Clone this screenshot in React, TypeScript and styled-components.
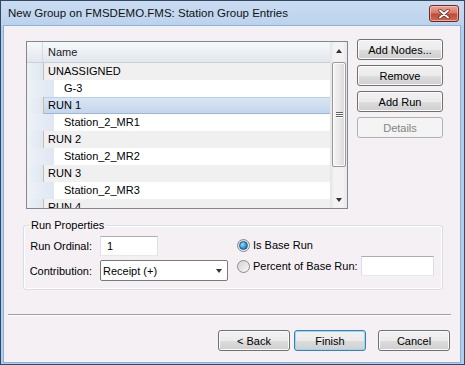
import styled, { createGlobalStyle } from 'styled-components';

const GlobalStyle = createGlobalStyle`
  html, body { margin: 0; padding: 0; background: #fff; }
  body { font-family: 'Liberation Sans', Arial, sans-serif; font-size: 11px; color: #000; }
  * { box-sizing: border-box; }
`;

const Window = styled.div`
  width: 465px;
  height: 365px;
  display: flex;
  flex-direction: column;
  border: 1px solid #34485f;
  background: #b3cdea;
  padding: 0 4px 2px 3px;
`;

const TitleBar = styled.div`
  height: 25px;
  margin: 0 -4px 0 -3px;
  padding: 0 5px 0 7px;
  display: flex;
  align-items: center;
  justify-content: space-between;
  background: linear-gradient(#c9dcf2, #bcd2ec);
`;

const Title = styled.span`
  font-size: 11.5px;
  color: #111;
  margin-top: -1px;
`;

const CloseButton = styled.div`
  align-self: flex-start;
  margin-top: 4px;
  width: 30px;
  height: 17px;
  border: 1px solid #6b2a24;
  border-radius: 3px;
  background: linear-gradient(#e9a595 0%, #d9786a 45%, #c14b35 55%, #cf6a4f 100%);
  box-shadow: inset 0 0 0 1px rgba(255, 220, 210, 0.55);
  display: flex;
  align-items: center;
  justify-content: center;
`;

const Content = styled.div`
  flex: 1;
  background: #f4f0f4;
  box-shadow: 0 0 0 1px #88b3e0;
  display: flex;
  flex-direction: column;
`;

const TopSection = styled.div`
  display: flex;
  align-items: flex-start;
  gap: 9px;
  margin: 13px 0 0 22px;
`;

const ListBox = styled.div`
  width: 322px;
  height: 168px;
  margin-top: 2px;
  border: 1px solid #828790;
  background: #fff;
  display: flex;
  overflow: hidden;
`;

const Grid = styled.div`
  flex: 1;
  display: flex;
  flex-direction: column;
  overflow: hidden;
`;

const HeaderRow = styled.div`
  height: 21px;
  flex: none;
  display: flex;
  background: linear-gradient(#f7f9fb, #e1e7ee);
  border-bottom: 1px solid #c9d1dc;
`;

const HeaderGutter = styled.div`
  width: 16px;
  border-right: 1px solid #d3dae4;
`;

const HeaderCell = styled.div`
  flex: 1;
  padding-left: 5px;
  line-height: 20px;
  color: #1a1a1a;
`;

const Row = styled.div`
  height: 17px;
  flex: none;
  display: flex;
`;

const Gutter = styled.div<{ $wide?: boolean }>`
  width: ${(p) => (p.$wide ? '27px' : '16px')};
  background: linear-gradient(to right, #eef2f8, #dfe7f1);
`;

type CellKind = 'group' | 'child' | 'selected';

const Cell = styled.div<{ $kind: CellKind }>`
  flex: 1;
  line-height: 17px;
  white-space: nowrap;
  padding-left: ${(p) => (p.$kind === 'child' ? '9px' : '4px')};
  background: ${(p) =>
    p.$kind === 'child'
      ? '#fff'
      : p.$kind === 'selected'
        ? 'linear-gradient(#dae6f5, #c3d5ec)'
        : '#f0f0f0'};
  border-left: 1px solid ${(p) => (p.$kind === 'child' ? 'transparent' : '#c8bda6')};
  box-shadow: ${(p) => (p.$kind === 'selected' ? 'inset 0 -1px 0 #9ab6da, inset 0 1px 0 #b9cfea' : 'none')};
`;

const ScrollBar = styled.div`
  width: 17px;
  flex: none;
  display: flex;
  flex-direction: column;
  background: linear-gradient(to right, #e4e4e4, #f3f3f3 25%, #f3f3f3 75%, #e8e8e8);
`;

const ArrowButton = styled.div`
  height: 17px;
  flex: none;
  display: flex;
  align-items: center;
  justify-content: center;
`;

const Arrow = styled.div<{ $down?: boolean }>`
  width: 0;
  height: 0;
  border-left: 3.5px solid transparent;
  border-right: 3.5px solid transparent;
  ${(p) => (p.$down ? 'border-top: 4px solid #333;' : 'border-bottom: 4px solid #333;')}
`;

const Thumb = styled.div`
  height: 105px;
  margin: 3px 1px 0 2px;
  border: 1px solid #979797;
  border-radius: 2px;
  background: linear-gradient(to right, #f5f5f5, #e9e9e9 50%, #d9d9d9);
  box-shadow: inset 0 0 0 1px #fbfbfb;
  display: flex;
  flex-direction: column;
  align-items: center;
  justify-content: center;
  gap: 1px;
`;

const Grip = styled.div`
  width: 7px;
  height: 1px;
  background: #606060;
  box-shadow: 0 1px 0 #fff;
`;

const Spacer = styled.div`
  flex: 1;
`;

const SideButtons = styled.div`
  width: 86px;
  display: flex;
  flex-direction: column;
  gap: 5px;
`;

const Button = styled.button<{ $default?: boolean; $width?: number }>`
  width: ${(p) => (p.$width ? `${p.$width}px` : '100%')};
  height: 21px;
  padding: 0;
  font-family: 'Liberation Sans', Arial, sans-serif;
  font-size: 11px;
  color: #000;
  border: 1px solid ${(p) => (p.$default ? '#3c7fb1' : '#707070')};
  border-radius: 3px;
  background: linear-gradient(#f2f2f2 0%, #ebebeb 50%, #dddddd 50%, #cfcfcf 100%);
  box-shadow: inset 0 0 0 1px ${(p) => (p.$default ? '#9bd6f6' : '#fbfbfb')};
  &:disabled {
    border-color: #adb2b5;
    background: #f4f4f4;
    color: #838383;
    box-shadow: none;
  }
`;

const GroupBox = styled.fieldset`
  width: 420px;
  margin: 9px 0 0 19px;
  padding: 0 0 8px 0;
  border: 1px solid #d5dfe5;
  border-radius: 3px;
  box-shadow: inset 0 0 0 1px #fff;
  min-width: 0;
`;

const Legend = styled.legend`
  margin-left: 6px;
  padding: 0 1px;
  line-height: 14px;
`;

const GroupBody = styled.div`
  display: flex;
`;

const LeftCol = styled.div`
  width: 213px;
  display: flex;
  flex-direction: column;
  gap: 4px;
  padding-top: 4px;
`;

const RightCol = styled.div`
  flex: 1;
  display: flex;
  flex-direction: column;
  gap: 1px;
  padding-top: 3px;
`;

const FieldRow = styled.div`
  display: flex;
  align-items: center;
`;

const FieldLabel = styled.span`
  width: 68px;
  margin-right: 8px;
  text-align: right;
`;

const TextBox = styled.div<{ $width: number }>`
  width: ${(p) => p.$width}px;
  height: 20px;
  background: #fff;
  border: 1px solid #dbdfe6;
  border-top-color: #abadb3;
  border-bottom-color: #e3e9ef;
  padding-left: 6px;
  line-height: 18px;
`;

const Select = styled.div`
  width: 128px;
  height: 21px;
  background: #fff;
  border: 1px solid #7a7a7a;
  border-radius: 2px;
  display: flex;
  align-items: center;
  justify-content: space-between;
  padding: 0 5px 0 2px;
`;

const RadioRow = styled.div`
  height: 20px;
  display: flex;
  align-items: center;
  gap: 3px;
`;

const Radio = styled.span<{ $checked?: boolean }>`
  width: 13px;
  height: 13px;
  flex: none;
  border-radius: 50%;
  border: 1px solid #8a8a8a;
  background: linear-gradient(135deg, #d4d4d4, #f7f7f7);
  display: flex;
  align-items: center;
  justify-content: center;
  &::after {
    content: '';
    display: ${(p) => (p.$checked ? 'block' : 'none')};
    width: 7px;
    height: 7px;
    border-radius: 50%;
    border: 1px solid #1c5a8c;
    background: radial-gradient(circle at 35% 35%, #9fdcfb, #2f8ad0 60%, #17639f);
  }
`;

const PercentBox = styled(TextBox)`
  margin-left: 0;
`;

const Separator = styled.div`
  width: 443px;
  height: 2px;
  margin: 24px 0 0 4px;
  border-top: 1px solid #a0a0a0;
  border-bottom: 1px solid #fff;
`;

const Footer = styled.div`
  display: flex;
  justify-content: flex-end;
  gap: 4px;
  margin: 14px 10px 0 0;
`;

const CancelSlot = styled.div`
  margin-left: 8px;
`;

const rows: { label: string; kind: CellKind }[] = [
  { label: 'UNASSIGNED', kind: 'group' },
  { label: 'G-3', kind: 'child' },
  { label: 'RUN 1', kind: 'selected' },
  { label: 'Station_2_MR1', kind: 'child' },
  { label: 'RUN 2', kind: 'group' },
  { label: 'Station_2_MR2', kind: 'child' },
  { label: 'RUN 3', kind: 'group' },
  { label: 'Station_2_MR3', kind: 'child' },
  { label: 'RUN 4', kind: 'group' },
];

const App = () => (
  <>
    <GlobalStyle />
    <Window>
      <TitleBar>
        <Title>New Group on FMSDEMO.FMS: Station Group Entries</Title>
        <CloseButton>
          <svg width='12' height='10' viewBox='0 0 12 10'>
            <path d='M2 1.5 L10 8.5 M10 1.5 L2 8.5' stroke='#5a1a12' strokeWidth='3.2' strokeLinecap='round' />
            <path d='M2 1.5 L10 8.5 M10 1.5 L2 8.5' stroke='#fff' strokeWidth='2' strokeLinecap='round' />
          </svg>
        </CloseButton>
      </TitleBar>
      <Content>
        <TopSection>
          <ListBox>
            <Grid>
              <HeaderRow>
                <HeaderGutter />
                <HeaderCell>Name</HeaderCell>
              </HeaderRow>
              {rows.map((r) => (
                <Row key={r.label}>
                  <Gutter $wide={r.kind === 'child'} />
                  <Cell $kind={r.kind}>{r.label}</Cell>
                </Row>
              ))}
            </Grid>
            <ScrollBar>
              <ArrowButton>
                <Arrow />
              </ArrowButton>
              <Thumb>
                <Grip />
                <Grip />
                <Grip />
              </Thumb>
              <Spacer />
              <ArrowButton>
                <Arrow $down />
              </ArrowButton>
            </ScrollBar>
          </ListBox>
          <SideButtons>
            <Button>Add Nodes...</Button>
            <Button>Remove</Button>
            <Button>Add Run</Button>
            <Button disabled>Details</Button>
          </SideButtons>
        </TopSection>

        <GroupBox>
          <Legend>Run Properties</Legend>
          <GroupBody>
            <LeftCol>
              <FieldRow>
                <FieldLabel>Run Ordinal:</FieldLabel>
                <TextBox $width={58}>1</TextBox>
              </FieldRow>
              <FieldRow>
                <FieldLabel>Contribution:</FieldLabel>
                <Select>
                  <span>Receipt (+)</span>
                  <Arrow $down />
                </Select>
              </FieldRow>
            </LeftCol>
            <RightCol>
              <RadioRow>
                <Radio $checked />
                <span>Is Base Run</span>
              </RadioRow>
              <RadioRow>
                <Radio />
                <span>Percent of Base Run:</span>
                <PercentBox $width={73} />
              </RadioRow>
            </RightCol>
          </GroupBody>
        </GroupBox>

        <Separator />
        <Footer>
          <Button $width={72}>&lt; Back</Button>
          <Button $width={72} $default>
            Finish
          </Button>
          <CancelSlot>
            <Button $width={72}>Cancel</Button>
          </CancelSlot>
        </Footer>
      </Content>
    </Window>
  </>
);

export default App;
